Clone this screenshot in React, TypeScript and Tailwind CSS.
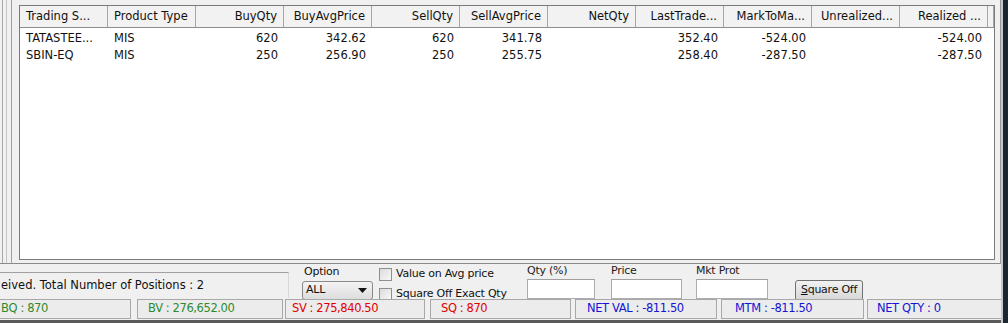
import React from 'react';

const columns = [
  { title: 'Trading S...', align: 'left' },
  { title: 'Product Type', align: 'left' },
  { title: 'BuyQty', align: 'right' },
  { title: 'BuyAvgPrice', align: 'right' },
  { title: 'SellQty', align: 'right' },
  { title: 'SellAvgPrice', align: 'right' },
  { title: 'NetQty', align: 'right' },
  { title: 'LastTrade...', align: 'right' },
  { title: 'MarkToMa...', align: 'right' },
  { title: 'Unrealized...', align: 'right' },
  { title: 'Realized ...', align: 'right' },
];

const rows = [
  ['TATASTEE...', 'MIS', '620', '342.62', '620', '341.78', '', '352.40', '-524.00', '', '-524.00'],
  ['SBIN-EQ', 'MIS', '250', '256.90', '250', '255.75', '', '258.40', '-287.50', '', '-287.50'],
];

const stats = [
  { label: 'BQ : 870', color: 'text-[#2f8a2f]', w: 'w-[132px]', pad: 'pl-[1px]', ml: 'ml-0' },
  { label: 'BV : 276,652.00', color: 'text-[#2f8a2f]', w: 'w-[146px]', pad: 'pl-[10px]', ml: 'ml-[6px]' },
  { label: 'SV : 275,840.50', color: 'text-[#e00000]', w: 'w-[140px]', pad: 'pl-[6px]', ml: 'ml-[2px]' },
  { label: 'SQ : 870', color: 'text-[#e00000]', w: 'w-[141px]', pad: 'pl-[10px]', ml: 'ml-[5px]' },
  { label: 'NET VAL : -811.50', color: 'text-[#1414d4]', w: 'w-[142px]', pad: 'pl-[11px]', ml: 'ml-[4px]' },
  { label: 'MTM : -811.50', color: 'text-[#1414d4]', w: 'w-[143px]', pad: 'pl-[13px]', ml: 'ml-[4px]' },
  { label: 'NET QTY : 0', color: 'text-[#1414d4]', w: 'w-[138px]', pad: 'pl-[9px]', ml: 'ml-[3px]' },
];

const Checkbox = ({ label }: { label: string }) => (
  <div className="flex items-center gap-[4px] h-[16px]">
    <div className="w-[13px] h-[13px] border border-[#8e8f8f] bg-gradient-to-br from-[#dcdcdc] to-[#f8f8f8]" />
    <span>{label}</span>
  </div>
);

const Field = ({ label, ml, w }: { label: string; ml: string; w: string }) => (
  <div className={`flex flex-col ${ml}`}>
    <span className="h-[14px] leading-[14px] text-[#222]">{label}</span>
    <div className={`mt-[1px] ${w} h-[22px] bg-white border border-[#abadb3] border-t-[#a0a0a0]`} />
  </div>
);

export default function App() {
  return (
    <div className="w-[1008px] h-[323px] bg-[#f0f0f0] flex overflow-hidden text-[11.5px] text-[#111] [font-family:'DejaVu_Sans',sans-serif]">
      <div className="w-[1001px] flex flex-col">
        {/* grid panel */}
        <div className="h-[264px] flex border-b border-[#8a8a8a] border-r border-r-[#9a9a9a]">
          <div className="w-[19px] flex">
            <div className="ml-[2px] w-[1px] bg-[#a8a8a8]" />
            <div className="ml-[3px] w-[1px] bg-[#c4c4c4]" />
            <div className="ml-[4px] w-[1px] bg-[#a0a0a0]" />
          </div>
          <div className="mt-[5px] mb-[3px] w-[976px] border border-[#7a7a7a] bg-white flex flex-col">
            <div className="flex h-[22px] bg-[#f2f2f2] border-b border-[#8e8e8e]">
              {columns.map((c) => (
                <div
                  key={c.title}
                  className={`w-[88px] shrink-0 border-r border-[#a6a6a6] flex items-center px-[6px] ${c.align === 'right' ? 'justify-end' : 'justify-start'} whitespace-nowrap overflow-hidden`}
                >
                  {c.title}
                </div>
              ))}
              <div className="w-[7px] border-r border-[#a6a6a6]" />
            </div>
            <div className="pt-[2px]">
              {rows.map((r) => (
                <div key={r[0]} className="flex h-[17px] items-center">
                  {r.map((v, i) => (
                    <div
                      key={i}
                      className={`w-[88px] shrink-0 px-[6px] whitespace-nowrap ${columns[i].align === 'right' ? 'text-right' : 'text-left'}`}
                    >
                      {v}
                    </div>
                  ))}
                </div>
              ))}
            </div>
          </div>
        </div>

        {/* controls */}
        <div className="h-[35px] flex text-[11px] tracking-[-0.25px]">
          <div className="mt-[8px] w-[289px] h-[26px] border-t border-[#a0a0a0] border-r border-r-[#d8d8d8] flex items-center pl-[1px] whitespace-nowrap overflow-hidden text-[11.5px] tracking-normal">
            eived. Total Number of Positions : 2
          </div>
          <div className="ml-[13px] flex flex-col">
            <span className="h-[14px] leading-[14px] mt-[1px] ml-[2px]">Option</span>
            <div className="mt-[2px] w-[71px] h-[19px] rounded-[3px] border border-[#8a8a8a] bg-gradient-to-b from-[#f4f4f4] to-[#dddddd] flex items-center justify-between pl-[3px] pr-[5px]">
              <span>ALL</span>
              <svg width="9" height="5" viewBox="0 0 9 5">
                <path d="M0 0 L9 0 L4.5 5 Z" fill="#111" />
              </svg>
            </div>
          </div>
          <div className="ml-[6px] mt-[2px] w-[130px] flex flex-col gap-[4px]">
            <Checkbox label="Value on Avg  price" />
            <Checkbox label="Square Off Exact Qty" />
          </div>
          <Field label="Qty (%)" ml="ml-[18px]" w="w-[68px]" />
          <Field label="Price" ml="ml-[16px]" w="w-[71px]" />
          <Field label="Mkt Prot" ml="ml-[14px]" w="w-[72px]" />
          <div className="ml-[27px] mt-[16px] w-[68px] h-[21px] rounded-[3px] border border-[#707070] bg-gradient-to-b from-[#f2f2f2] to-[#d6d6d6] flex items-center justify-center">
            <span>
              <span className="underline">S</span>quare Off
            </span>
          </div>
        </div>

        {/* status bar */}
        <div className="h-[21px] flex ml-[-1px] text-[11.5px] tracking-[-0.4px]">
          {stats.map((s) => (
            <div
              key={s.label}
              className={`${s.w} ${s.ml} shrink-0 h-[20px] border border-[#a8a8a8] bg-[#ececec] flex items-center ${s.pad} ${s.color} whitespace-nowrap`}
            >
              {s.label}
            </div>
          ))}
        </div>
        <div className="flex-1 bg-[#5a5a5a]" />
      </div>
      <div className="w-[2px] bg-[#c8c8c8]" />
      <div className="flex-1 bg-[#1c2633]" />
    </div>
  );
}
